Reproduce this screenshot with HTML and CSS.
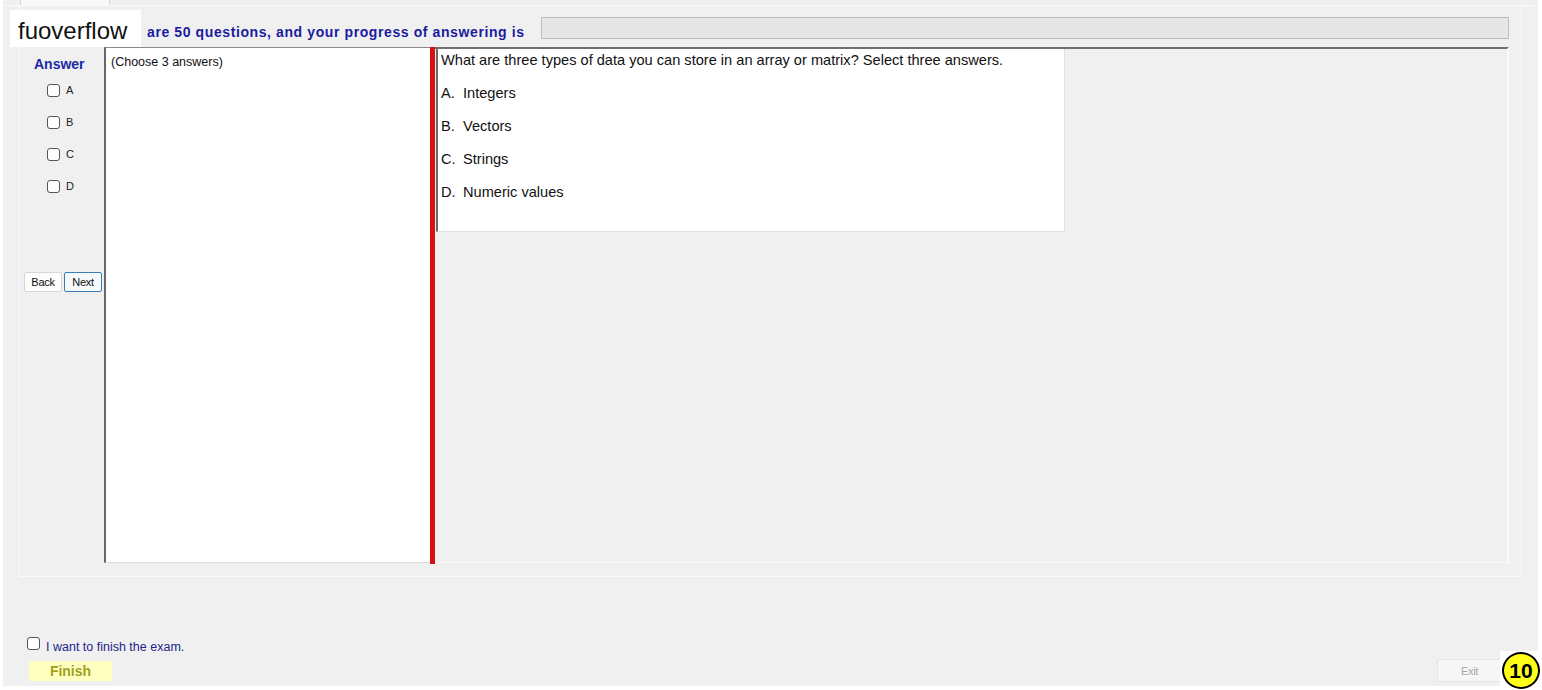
FILE: index.html
```html
<!DOCTYPE html>
<html lang="en">
<head>
    <meta charset="UTF-8">
    <title>Exam</title>
    <link rel="stylesheet" href="styles.css">
</head>
<body>
    <div class="window">
        <div class="tabstrip">
            <div class="tab"></div>
        </div>

        <div class="tabpage">
            <div class="header">
                <div class="title">are 50 questions, and your progress of answering is</div>
                <div class="progress"></div>
            </div>

            <div class="main">
                <!-- answer column -->
                <div class="answer-col">
                    <div class="answer-title">Answer</div>
                    <label class="opt"><input type="checkbox"><span>A</span></label>
                    <label class="opt"><input type="checkbox"><span>B</span></label>
                    <label class="opt"><input type="checkbox"><span>C</span></label>
                    <label class="opt"><input type="checkbox"><span>D</span></label>
                    <div class="nav">
                        <button class="btn">Back</button>
                        <button class="btn btn-focus">Next</button>
                    </div>
                </div>

                <div class="hint-panel">(Choose 3 answers)</div>
                <div class="splitter"></div>

                <div class="question-area">
                    <div class="question-box">
                        <p>What are three types of data you can store in an array or matrix? Select three answers.</p>
                        <p><span class="key">A.</span>Integers</p>
                        <p><span class="key">B.</span>Vectors</p>
                        <p><span class="key">C.</span>Strings</p>
                        <p><span class="key">D.</span>Numeric values</p>
                    </div>
                </div>
            </div>
        </div>

        <div class="footer">
            <div class="finish-block">
                <label class="finish-check"><input type="checkbox"><span>I want to finish the exam.</span></label>
                <button class="finish-btn">Finish</button>
            </div>
            <button class="exit-btn" disabled>Exit</button>
        </div>
    </div>

    <!-- watermark + page badge -->
    <div class="watermark">fuoverflow</div>
    <div class="badge"><span>10</span></div>
</body>
</html>
```

FILE: styles.css
```css
/* Resetting some defaults */
* {
    margin: 0;
    padding: 0;
    box-sizing: border-box;
}

body {
    position: relative;
    width: 1542px;
    height: 690px;
    overflow: hidden;
    background: #fff;
    font-family: 'Liberation Sans', Arial, sans-serif;
    color: #000;
}

input[type="checkbox"] {
    appearance: none;
    width: 13px;
    height: 13px;
    border: 1px solid #555;
    border-radius: 3px;
    background: #fff;
    flex: none;
}

/* Window */
.window {
    width: 1535px;
    height: 686px;
    margin-left: 3px;
    background: #f0f0f0;
    display: flex;
    flex-direction: column;
}

.tabstrip {
    height: 6px;
    padding-left: 17px;
    display: flex;
    border-bottom: 1px solid #fafafa;
}

.tab {
    width: 90px;
    background: #f9f9f9;
    border-left: 1px solid #d8d8d8;
    border-right: 1px solid #d8d8d8;
}

.tabpage {
    margin-left: 16px;
    width: 1503px;
    height: 571px;
    border: 1px solid #fafafa;
    border-top: none;
    padding: 0 12px 0 2px;
    display: flex;
    flex-direction: column;
}

/* Header */
.header {
    height: 41px;
    display: flex;
    align-items: flex-start;
}

.title {
    margin-top: 18px;
    margin-left: 125px;
    font-size: 14px;
    line-height: 16px;
    letter-spacing: 0.6px;
    font-weight: bold;
    color: #1b1ba0;
    white-space: nowrap;
}

.progress {
    margin-top: 11px;
    margin-left: 16px;
    flex: 1;
    height: 22px;
    background: #e6e6e6;
    border: 1px solid #bdbdbd;
}

/* Main area */
.main {
    height: 516px;
    display: flex;
}

.answer-col {
    width: 82px;
    display: flex;
    flex-direction: column;
}

.answer-title {
    margin-top: 9px;
    margin-left: 12px;
    font-size: 14px;
    line-height: 16px;
    font-weight: bold;
    color: #1a2aa6;
}

.opt {
    height: 32px;
    display: flex;
    align-items: center;
    padding-left: 25px;
    gap: 6px;
    font-size: 11px;
    color: #222;
}

.opt:first-of-type {
    margin-top: 2px;
}

.nav {
    margin-top: 70px;
    margin-left: 2px;
    display: flex;
    gap: 2px;
}

.btn {
    width: 38px;
    height: 20px;
    background: #fdfdfd;
    border: 1px solid #d6d6d6;
    border-radius: 2px;
    font-family: 'Liberation Sans', Arial, sans-serif;
    font-size: 11px;
    letter-spacing: -0.3px;
    color: #111;
}

.btn-focus {
    border-color: #3b7db4;
    background: #f6fafd;
}

.hint-panel {
    width: 326px;
    height: 516px;
    background: #fff;
    border-top: 1px solid #8a8a8a;
    border-left: 2px solid #686868;
    border-bottom: 1px solid #dadada;
    padding: 7px 0 0 5px;
    font-size: 12.5px;
    line-height: 14px;
    color: #111;
}

.splitter {
    width: 5px;
    height: 517px;
    background: #d81212;
}

.question-area {
    flex: 1;
    height: 516px;
    border-top: 2px solid #707070;
    border-right: 2px solid #fbfbfb;
    border-bottom: 1px solid #fbfbfb;
    padding-left: 1px;
}

.question-box {
    width: 629px;
    height: 183px;
    background: #fff;
    border-left: 2px solid #6a6a6a;
    border-right: 1px solid #e2e2e2;
    border-bottom: 1px solid #e2e2e2;
    padding: 3px 0 0 3px;
    font-size: 14.6px;
    line-height: 17px;
    color: #111;
}

.question-box p {
    margin-bottom: 16px;
}

.key {
    display: inline-block;
    width: 22px;
}

/* Footer */
.footer {
    flex: 1;
    display: flex;
    justify-content: space-between;
    align-items: flex-end;
    padding: 0 36px 4px 24px;
}

.finish-block {
    display: flex;
    flex-direction: column;
    gap: 6px;
    padding-bottom: 1px;
}

.finish-check {
    display: flex;
    align-items: flex-start;
    gap: 6px;
    font-size: 12.5px;
    line-height: 16px;
    color: #24248c;
}

.finish-check input {
    margin-top: 0;
}

.finish-check span {
    padding-top: 2px;
}

.finish-btn {
    margin-left: 2px;
    width: 83px;
    height: 20px;
    border: none;
    background: #ffffc2;
    font-family: 'Liberation Sans', Arial, sans-serif;
    font-size: 14px;
    font-weight: bold;
    color: #a0a01c;
}

.exit-btn {
    width: 65px;
    height: 23px;
    background: #f6f6f6;
    border: 1px solid #e4e4e4;
    font-family: 'Liberation Sans', Arial, sans-serif;
    font-size: 11px;
    letter-spacing: -0.3px;
    color: #a6a6a6;
}

/* Overlays */
.watermark {
    position: absolute;
    left: 10px;
    top: 10px;
    width: 131px;
    height: 37px;
    background: #fff;
    padding: 4px 0 0 8px;
    font-size: 24px;
    line-height: 34px;
    color: #111;
}

.badge {
    position: absolute;
    right: 0;
    bottom: 0;
    width: 42px;
    height: 39px;
    background: #fff;
    display: flex;
    align-items: center;
    justify-content: center;
}

.badge span {
    width: 38px;
    height: 37px;
    border-radius: 50%;
    background: #ffff1a;
    border: 2px solid #000;
    display: flex;
    align-items: center;
    justify-content: center;
    font-size: 21px;
    font-weight: bold;
    color: #000;
}
```
